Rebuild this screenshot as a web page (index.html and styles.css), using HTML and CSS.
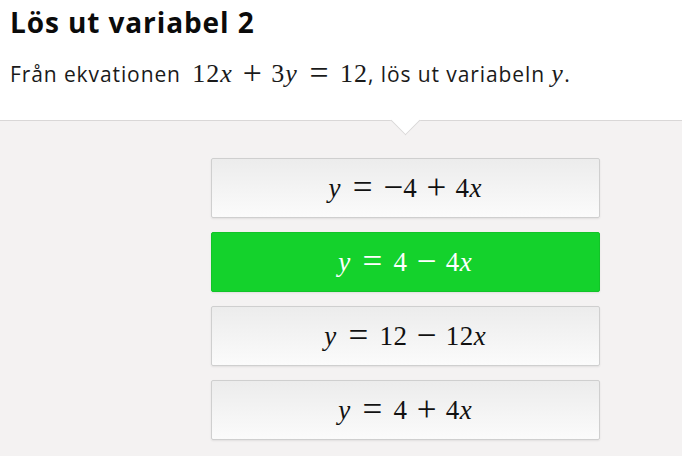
FILE: index.html
```html
<!DOCTYPE html>
<html lang="sv">
<head>
<meta charset="utf-8">
<title>Lös ut variabel 2</title>
<link rel="stylesheet" href="styles.css">
</head>
<body>
<header class="head">
  <h1 class="title">Lös ut variabel 2</h1>
  <p class="question">Från ekvationen <span class="math inline eq"><span class="n">12</span><i>x</i><span class="bin">+</span><span class="n">3</span><i>y</i><span class="rel">=</span><span class="n">12</span></span>, lös ut variabeln <span class="math inline"><i>y</i></span>.</p>
</header>
<main class="panel">
  <div class="caret"></div>
  <div class="options">
    <button class="opt"><span class="math"><i>y</i><span class="rel">=</span><span class="neg">−</span><span class="n">4</span><span class="bin">+</span><span class="n">4</span><i>x</i></span></button>
    <button class="opt correct"><span class="math"><i>y</i><span class="rel">=</span><span class="n">4</span><span class="bin">−</span><span class="n">4</span><i>x</i></span></button>
    <button class="opt"><span class="math"><i>y</i><span class="rel">=</span><span class="n">12</span><span class="bin">−</span><span class="n">12</span><i>x</i></span></button>
    <button class="opt"><span class="math"><i>y</i><span class="rel">=</span><span class="n">4</span><span class="bin">+</span><span class="n">4</span><i>x</i></span></button>
  </div>
</main>
</body>
</html>
```
FILE: styles.css
```css
* { box-sizing: border-box; }
html, body { margin: 0; padding: 0; }
body {
  width: 682px;
  height: 456px;
  overflow: hidden;
  background: #ffffff;
  font-family: "Open Sans", "Noto Sans", sans-serif;
  color: #111;
}
.head {
  height: 120px;
  padding: 0 10px;
  background: #fff;
}
.title {
  margin: 0;
  padding-top: 4px;
  font-size: 28px;
  line-height: 36px;
  font-weight: 700;
  letter-spacing: 0.9px;
  color: #0b0b0b;
}
.question {
  margin: 16px 0 0;
  font-size: 21px;
  line-height: 28px;
  letter-spacing: 0.9px;
  color: #1a1a1a;
}
.math {
  font-family: "Liberation Serif", "DejaVu Serif", serif;
  white-space: nowrap;
  letter-spacing: 0;
}
.math i { font-style: italic; letter-spacing: 1px; }
.math .n { letter-spacing: 0.5px; }
.math .bin,
.math .rel,
.math .neg {
  display: inline-block;
  text-align: center;
  font-size: 1.3em;
  line-height: 1;
  vertical-align: -0.06em;
}
.math .bin { width: 1.09em; }
.math .rel { width: 1.2em; }
.math .neg { width: 0.56em; }
.inline {
  font-size: 26px;
  line-height: 0;
}
.inline i { letter-spacing: 1.5px; }
.inline .n { letter-spacing: 1px; }
.inline .bin { width: 1.12em; }
.inline .rel { width: 1.24em; }
.eq { margin-left: 5px; }
.panel {
  position: relative;
  height: 336px;
  background: #f4f2f2;
  border-top: 1px solid #d9d7d7;
  padding: 37px 0 0 211px;
}
.caret {
  position: absolute;
  left: 395px;
  top: -11px;
  width: 21px;
  height: 21px;
  background: #fff;
  border-right: 1px solid #d9d7d7;
  border-bottom: 1px solid #d9d7d7;
  transform: rotate(45deg);
}
.options {
  width: 389px;
  display: flex;
  flex-direction: column;
  gap: 14px;
}
.opt {
  height: 60px;
  margin: 0;
  border: 1px solid #cfcfcf;
  border-radius: 2px;
  background: linear-gradient(#ececec, #fbfbfb);
  box-shadow: 0 1px 2px rgba(0,0,0,0.08);
  font-size: 27px;
  color: #111;
  display: flex;
  align-items: center;
  justify-content: center;
  padding: 0;
}
.opt.correct {
  background: #14d22c;
  border-color: #12c428;
  color: #fff;
}
```
